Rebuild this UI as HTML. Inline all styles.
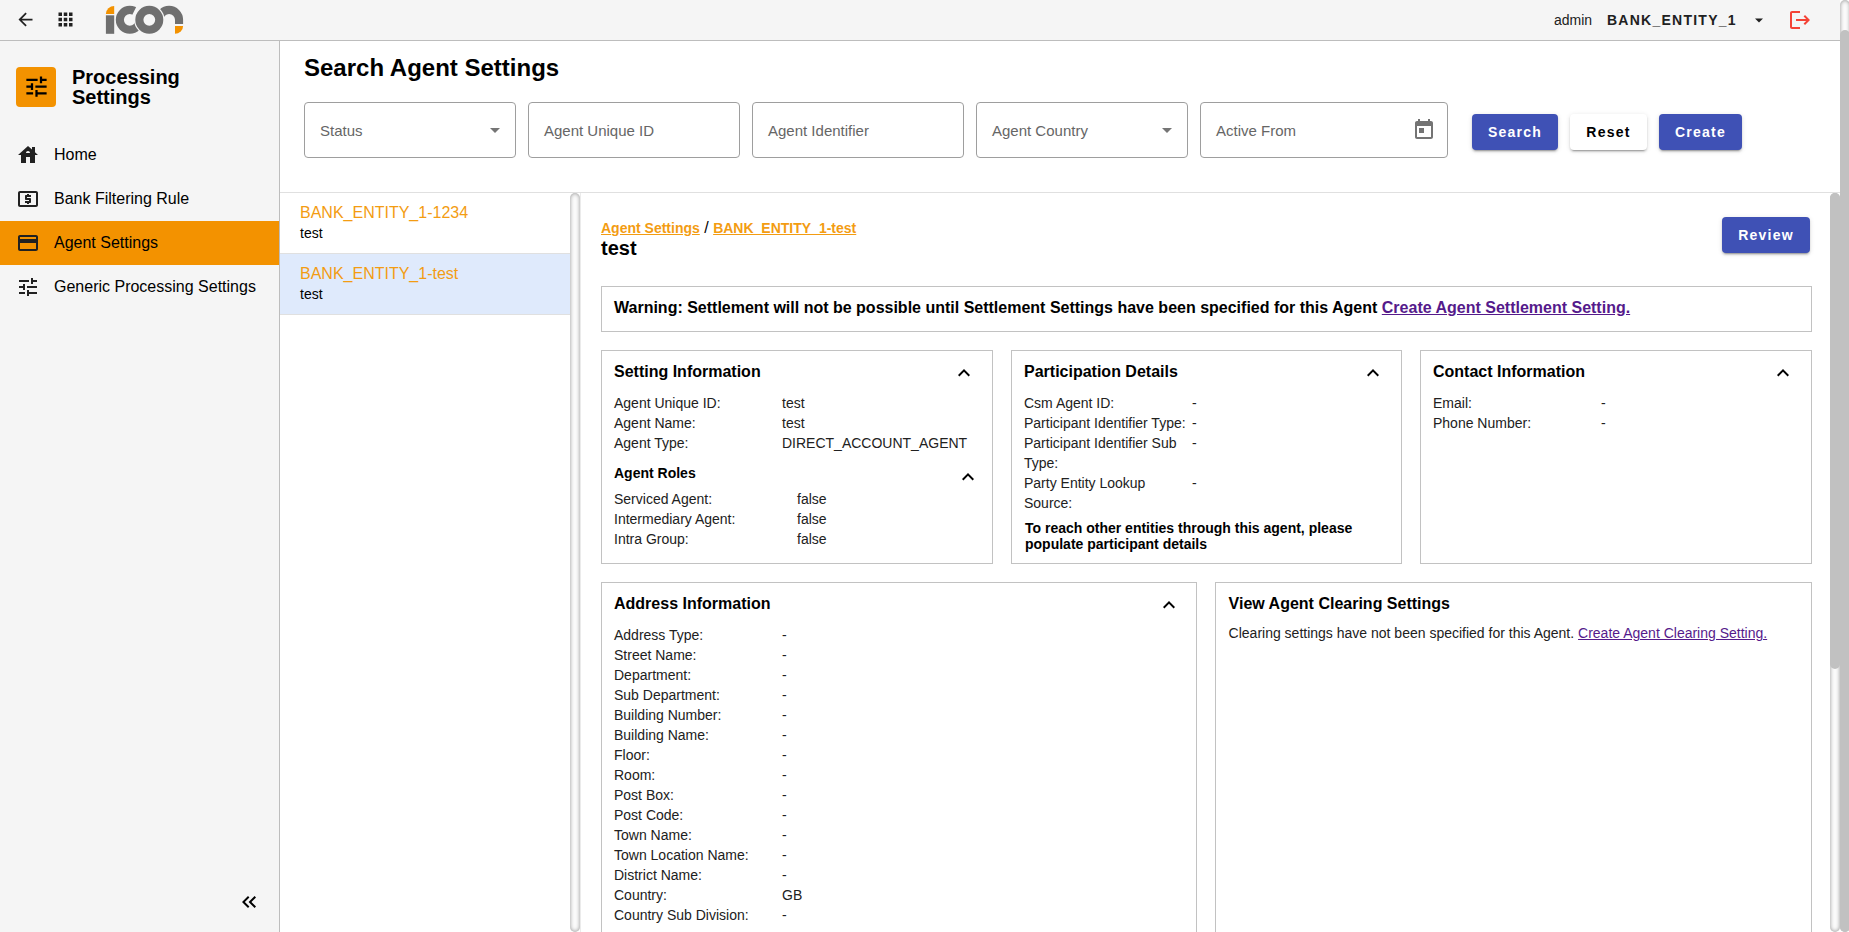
<!DOCTYPE html>
<html lang="en">
<head>
<meta charset="utf-8">
<title>Search Agent Settings</title>
<style>
*{box-sizing:border-box;margin:0;padding:0}
html,body{width:1849px;height:932px;overflow:hidden;background:#fff}
body{font-family:"Liberation Sans",Arial,sans-serif;color:#000;position:relative;font-size:14px}
.abs{position:absolute}
svg{display:block}
/* header */
#hdr{position:absolute;left:0;top:0;width:1840px;height:41px;background:#f5f5f5;border-bottom:1px solid #bdbdbd}
#hdr .ico{position:absolute;fill:#212121}
#admin{position:absolute;left:1554px;top:11px;font-size:14px;line-height:18px;color:#212121}
#entity{position:absolute;left:1607px;top:11px;font-size:14px;line-height:18px;font-weight:bold;letter-spacing:1.25px;color:#212121}
/* sidebar */
#side{position:absolute;left:0;top:41px;width:280px;height:891px;background:#f5f5f5;border-right:1px solid #bdbdbd}
#tile{position:absolute;left:16px;top:26px;width:40px;height:40px;background:#f39200;border-radius:4px}
#stitle{position:absolute;left:72px;top:26px;font-size:20px;line-height:20px;font-weight:bold;color:#000}
.mi{position:absolute;left:0;width:279px;height:44px}
.mi svg{position:absolute;left:16px;top:10px;fill:#212121}
.mi span{position:absolute;left:54px;top:12px;font-size:16px;line-height:20px;color:#000}
.mi.act{background:#f39200}
/* main */
#main{position:absolute;left:280px;top:41px;width:1560px;height:891px;background:#fff}
h1{position:absolute;left:24px;top:12px;font-size:24px;line-height:30px;font-weight:bold;color:#000}
.fld{position:absolute;top:61px;height:56px;border:1px solid #9e9e9e;border-radius:4px;background:#fff}
.fld span{position:absolute;left:15px;top:19px;font-size:15px;line-height:18px;color:#666;white-space:nowrap}
.fld .dd{position:absolute;right:15px;top:25px;width:0;height:0;border-left:5px solid transparent;border-right:5px solid transparent;border-top:5px solid #757575}
.btn{position:absolute;top:73px;height:36px;border-radius:4px;font-size:14px;font-weight:bold;letter-spacing:1.25px;line-height:36px;text-align:center;box-shadow:0 3px 1px -2px rgba(0,0,0,.2),0 2px 2px 0 rgba(0,0,0,.14),0 1px 5px 0 rgba(0,0,0,.12)}
.btn.p{background:#3f51b5;color:#fff}
.btn.w{background:#fff;color:#000}
#hr{position:absolute;left:0;top:151px;width:1560px;height:1px;background:#e0e0e0}

/* list */
#list{position:absolute;left:280px;top:193px;width:290px;height:739px;background:#fff}
.li{position:relative;height:61px;border-bottom:1px solid #e0e0e0;padding:10px 20px 10px 20px}
.li.sel{background:#dfeafc}
.li b{display:block;font-weight:normal;font-size:16px;line-height:20px;color:#f39c12}
.li i{display:block;font-style:normal;font-size:14px;line-height:20px;color:#000}
/* detail */
#detail{position:absolute;left:580px;top:193px;width:1250px;height:739px;overflow:hidden;background:#fff}
#detail .t{position:absolute;white-space:nowrap;font-size:14px;line-height:20px;color:#212121}
#crumb{position:absolute;left:21px;top:25px;font-size:14px;line-height:20px;font-weight:bold;color:#212121;white-space:nowrap}
#crumb u{color:#f39c12}
#h2{position:absolute;left:21px;top:43px;font-size:20px;line-height:24px;font-weight:bold;color:#000}
.card{position:absolute;border:1px solid #c2c2c2;background:#fff}
.card h3{position:absolute;left:12px;top:11px;font-size:16px;line-height:20px;font-weight:bold;color:#000;white-space:nowrap}
.card h4{position:absolute;left:12px;font-size:14px;line-height:20px;font-weight:bold;color:#000;white-space:nowrap}
.card .r{position:absolute;left:12px;font-size:14px;line-height:20px;color:#212121;white-space:nowrap}
.card .v{position:absolute;left:180px;font-size:14px;line-height:20px;color:#212121;white-space:nowrap}
.card svg.ch{position:absolute;fill:#000}
a.lk{color:#551a8b;text-decoration:underline}
#warn{position:absolute;left:21px;top:93px;width:1211px;height:46px;border:1px solid #c2c2c2}
#warn div{position:absolute;left:12px;top:11px;font-size:16px;line-height:20px;font-weight:bold;color:#000;white-space:nowrap}

.trk{position:absolute;width:10px;border-radius:5px;background:#fbfbfb;box-shadow:inset 0 0 4px rgba(0,0,0,.42)}
.thm{position:absolute;width:10px;border-radius:5px;background:#c1c1c1}
</style>
</head>
<body>
<div id="hdr">
  <svg class="ico" style="left:15px;top:9px" width="21" height="21" viewBox="0 0 24 24"><path d="M20 11H7.83l5.59-5.59L12 4l-8 8 8 8 1.41-1.41L7.83 13H20v-2z"/></svg>
  <svg class="ico" style="left:55px;top:9px" width="21" height="21" viewBox="0 0 24 24"><path d="M4 8h4V4H4v4zm6 12h4v-4h-4v4zm-6 0h4v-4H4v4zm0-6h4v-4H4v4zm6 0h4v-4h-4v4zm6-10v4h4V4h-4zm-6 4h4V4h-4v4zm6 6h4v-4h-4v4zm0 6h4v-4h-4v4z"/></svg>
  <svg class="abs" style="left:100px;top:0" width="90" height="40" viewBox="100 0 90 40">
    <path fill="#f39200" d="M114.2 5.9 A8.3 8.3 0 0 0 105.9 13.9 L114.2 13.9 Z"/>
    <rect fill="#6f6f6f" x="105.9" y="15.3" width="8.3" height="18.5"/>
    <path fill="#6f6f6f" fill-rule="evenodd" d="M115.8 19.87a14 14 0 1 0 28 0a14 14 0 1 0 -28 0Z M123.9 19.87a5.9 5.9 0 1 0 11.8 0a5.9 5.9 0 1 0 -11.8 0Z"/>
    <path fill="#6f6f6f" d="M155.1 19.87 A14 14 0 0 1 183.1 19.87 L183.1 23.9 L175 23.9 L175 19.87 A5.9 5.9 0 0 0 163.2 19.87 Z"/>
    <path fill="#f39200" d="M175 26 L183.1 26 A8.1 7.9 0 0 1 175 33.8 Z"/>
    <path fill="#f5f5f5" d="M129.8 19.87L138.69 1.96H150V19.87Z"/>
    <circle fill="#f5f5f5" cx="149.3" cy="19.87" r="15.2"/>
    <path fill="#6f6f6f" fill-rule="evenodd" d="M135.3 19.87a14 14 0 1 0 28 0a14 14 0 1 0 -28 0Z M143.4 19.87a5.9 5.9 0 1 0 11.8 0a5.9 5.9 0 1 0 -11.8 0Z"/>
  </svg>
  <div id="admin">admin</div>
  <div id="entity">BANK_ENTITY_1</div>
  <svg class="abs" style="left:1753px;top:14px" width="12" height="12" viewBox="0 0 12 12"><path fill="#212121" d="M2 4.5h8l-4 4z"/></svg>
  <svg class="abs" style="left:1787px;top:8px" width="26" height="24" viewBox="0 0 26 24"><path fill="#f44336" d="M18 7l-1.410 1.410L19.170 11H9v2h10.170l-2.580 2.590L18 17l5-5-5-5zM5 5h8V3H5c-1.100 0-2 .9-2 2v14c0 1.100.9 2 2 2h8v-2H5V5z"/></svg>
</div>

<div id="side">
  <div id="tile"><svg class="abs" style="left:6.5px;top:6px" width="27" height="27" viewBox="0 0 24 24"><path fill="#000" d="M3 17v2h6v-2H3zM3 5v2h10V5H3zm10 16v-2h8v-2h-8v-2h-2v6h2zM7 9v2H3v2h4v2h2V9H7zm14 4v-2H11v2h10zm-6-4h2V7h4V5h-4V3h-2v6z"/></svg></div>
  <div id="stitle">Processing<br>Settings</div>
  <div class="mi" style="top:92px"><svg width="24" height="24" viewBox="0 0 24 24"><path d="M19 9.3V4h-3v2.600L12 3 2 12h3v8h5v-6h4v6h5v-8h3l-3-2.700zm-9 .7c0-1.100.9-2 2-2s2 .9 2 2h-4z"/></svg><span>Home</span></div>
  <div class="mi" style="top:136px"><svg width="24" height="24" viewBox="0 0 24 24"><path d="M11 17h2v-1h1c.55 0 1-.45 1-1v-3c0-.55-.45-1-1-1h-3v-1h4V8h-2V7h-2v1h-1c-.55 0-1 .45-1 1v3c0 .55.45 1 1 1h3v1H9v2h2v1zm9-13H4c-1.110 0-1.990.89-1.990 2L2 18c0 1.110.89 2 2 2h16c1.110 0 2-.89 2-2V6c0-1.110-.89-2-2-2zm0 14H4V6h16v12z"/></svg><span>Bank Filtering Rule</span></div>
  <div class="mi act" style="top:180px"><svg width="24" height="24" viewBox="0 0 24 24"><path d="M20 4H4c-1.110 0-1.990.89-1.990 2L2 18c0 1.110.89 2 2 2h16c1.110 0 2-.89 2-2V6c0-1.110-.89-2-2-2zm0 14H4v-6h16v6zm0-10H4V6h16v2z"/></svg><span>Agent Settings</span></div>
  <div class="mi" style="top:224px"><svg width="24" height="24" viewBox="0 0 24 24"><path d="M3 17v2h6v-2H3zM3 5v2h10V5H3zm10 16v-2h8v-2h-8v-2h-2v6h2zM7 9v2H3v2h4v2h2V9H7zm14 4v-2H11v2h10zm-6-4h2V7h4V5h-4V3h-2v6z"/></svg><span>Generic Processing Settings</span></div>
  <svg class="abs" style="left:237px;top:849px" width="24" height="24" viewBox="0 0 24 24"><path fill="#000" d="M17.59 18L19 16.590 14.420 12 19 7.410 17.590 6l-6 6z M11 18l1.410-1.410L7.830 12l4.580-4.590L11 6l-6 6z"/></svg>
</div>

<div id="main">
  <h1>Search Agent Settings</h1>
  <div class="fld" style="left:24px;width:212px"><span>Status</span><i class="dd"></i></div>
  <div class="fld" style="left:248px;width:212px"><span>Agent Unique ID</span></div>
  <div class="fld" style="left:472px;width:212px"><span>Agent Identifier</span></div>
  <div class="fld" style="left:696px;width:212px"><span>Agent Country</span><i class="dd"></i></div>
  <div class="fld" style="left:920px;width:248px"><span>Active From</span>
    <svg class="abs" style="left:211px;top:15px" width="24" height="24" viewBox="0 0 24 24"><path fill="#747474" d="M19 3h-1V1h-2v2H8V1H6v2H5c-1.110 0-1.990.9-1.990 2L3 19c0 1.100.89 2 2 2h14c1.100 0 2-.9 2-2V5c0-1.100-.9-2-2-2zm0 16H5V8h14v11zM7 10h5v5H7z"/></svg>
  </div>
  <div class="btn p" style="left:1192px;width:86px">Search</div>
  <div class="btn w" style="left:1290px;width:77px">Reset</div>
  <div class="btn p" style="left:1379px;width:83px">Create</div>
  <div id="hr"></div>
  
</div>


<div id="list">
  <div class="li"><b>BANK_ENTITY_1-1234</b><i>test</i></div>
  <div class="li sel"><b>BANK_ENTITY_1-test</b><i>test</i></div>
</div>
<div id="detail">
  <div id="crumb"><u>Agent Settings</u><span style="font-size:16px;font-weight:normal;color:#000"> / </span><u>BANK_ENTITY_1-test</u></div>
  <div id="h2">test</div>
  <div class="btn p" style="left:1142px;top:24px;width:88px">Review</div>
  <div id="warn"><div>Warning: Settlement will not be possible until Settlement Settings have been specified for this Agent <a class="lk">Create Agent Settlement Setting.</a></div></div>

  <div class="card" style="left:21px;top:157px;width:392px;height:214px">
    <h3>Setting Information</h3>
    <svg class="ch" style="left:349.6px;top:10.2px" width="24" height="24" viewBox="0 0 24 24"><path d="M12 8l-6 6 1.410 1.410L12 10.830l4.590 4.580L18 14z"/></svg>
    <div class="r" style="top:42px">Agent Unique ID:</div>
    <div class="v" style="top:42px;left:180px">test</div>
    <div class="r" style="top:62px">Agent Name:</div>
    <div class="v" style="top:62px;left:180px">test</div>
    <div class="r" style="top:82px">Agent Type:</div>
    <div class="v" style="top:82px;left:180px">DIRECT_ACCOUNT_AGENT</div>
    <h4 style="top:112px">Agent Roles</h4>
    <svg class="ch" style="left:353.7px;top:114.4px" width="24" height="24" viewBox="0 0 24 24"><path d="M12 8l-6 6 1.410 1.410L12 10.830l4.590 4.580L18 14z"/></svg>
    <div class="r" style="top:138px">Serviced Agent:</div>
    <div class="v" style="top:138px;left:195px">false</div>
    <div class="r" style="top:158px">Intermediary Agent:</div>
    <div class="v" style="top:158px;left:195px">false</div>
    <div class="r" style="top:178px">Intra Group:</div>
    <div class="v" style="top:178px;left:195px">false</div>
  </div>

  <div class="card" style="left:431px;top:157px;width:391px;height:214px">
    <h3>Participation Details</h3>
    <svg class="ch" style="left:349.3px;top:10.2px" width="24" height="24" viewBox="0 0 24 24"><path d="M12 8l-6 6 1.410 1.410L12 10.830l4.590 4.580L18 14z"/></svg>
    <div class="r" style="top:42px">Csm Agent ID:</div>
    <div class="v" style="top:42px;left:180px">-</div>
    <div class="r" style="top:62px">Participant Identifier Type:</div>
    <div class="v" style="top:62px;left:180px">-</div>
    <div class="r" style="top:82px">Participant Identifier Sub</div>
    <div class="v" style="top:82px;left:180px">-</div>
    <div class="r" style="top:102px">Type:</div>
    <div class="r" style="top:122px">Party Entity Lookup</div>
    <div class="v" style="top:122px;left:180px">-</div>
    <div class="r" style="top:142px">Source:</div>
    <div class="r" style="top:169px;left:13px;font-weight:bold;line-height:16px;color:#000">To reach other entities through this agent, please<br>populate participant details</div>
  </div>

  <div class="card" style="left:840px;top:157px;width:392px;height:214px">
    <h3>Contact Information</h3>
    <svg class="ch" style="left:349.8px;top:10.2px" width="24" height="24" viewBox="0 0 24 24"><path d="M12 8l-6 6 1.410 1.410L12 10.830l4.590 4.580L18 14z"/></svg>
    <div class="r" style="top:42px">Email:</div>
    <div class="v" style="top:42px;left:180px">-</div>
    <div class="r" style="top:62px">Phone Number:</div>
    <div class="v" style="top:62px;left:180px">-</div>
  </div>

  <div class="card" style="left:21px;top:389px;width:596px;height:400px">
    <h3>Address Information</h3>
    <svg class="ch" style="left:555px;top:10.2px" width="24" height="24" viewBox="0 0 24 24"><path d="M12 8l-6 6 1.410 1.410L12 10.830l4.590 4.580L18 14z"/></svg>
    <div class="r" style="top:42px">Address Type:</div>
    <div class="v" style="top:42px;left:180px">-</div>
    <div class="r" style="top:62px">Street Name:</div>
    <div class="v" style="top:62px;left:180px">-</div>
    <div class="r" style="top:82px">Department:</div>
    <div class="v" style="top:82px;left:180px">-</div>
    <div class="r" style="top:102px">Sub Department:</div>
    <div class="v" style="top:102px;left:180px">-</div>
    <div class="r" style="top:122px">Building Number:</div>
    <div class="v" style="top:122px;left:180px">-</div>
    <div class="r" style="top:142px">Building Name:</div>
    <div class="v" style="top:142px;left:180px">-</div>
    <div class="r" style="top:162px">Floor:</div>
    <div class="v" style="top:162px;left:180px">-</div>
    <div class="r" style="top:182px">Room:</div>
    <div class="v" style="top:182px;left:180px">-</div>
    <div class="r" style="top:202px">Post Box:</div>
    <div class="v" style="top:202px;left:180px">-</div>
    <div class="r" style="top:222px">Post Code:</div>
    <div class="v" style="top:222px;left:180px">-</div>
    <div class="r" style="top:242px">Town Name:</div>
    <div class="v" style="top:242px;left:180px">-</div>
    <div class="r" style="top:262px">Town Location Name:</div>
    <div class="v" style="top:262px;left:180px">-</div>
    <div class="r" style="top:282px">District Name:</div>
    <div class="v" style="top:282px;left:180px">-</div>
    <div class="r" style="top:302px">Country:</div>
    <div class="v" style="top:302px;left:180px">GB</div>
    <div class="r" style="top:322px">Country Sub Division:</div>
    <div class="v" style="top:322px;left:180px">-</div>
  </div>

  <div class="card" style="left:635px;top:389px;width:597px;height:400px">
    <h3 style="left:12.6px">View Agent Clearing Settings</h3>
    <div class="r" style="left:12.6px;top:40px">Clearing settings have not been specified for this Agent. <a class="lk">Create Agent Clearing Setting.</a></div>
  </div>
</div>

<div class="trk" style="left:570px;top:193px;height:739px"></div>
<div class="abs" style="left:580px;top:193px;width:1px;height:739px;background:#ebebeb"></div>
<div class="trk" style="left:1830px;top:193px;height:739px"></div>
<div class="thm" style="left:1830px;top:193px;height:476px"></div>
<div class="trk" style="left:1840px;top:0;height:932px"></div>
<div class="thm" style="left:1840px;top:30px;height:902px"></div>

</body>
</html>
